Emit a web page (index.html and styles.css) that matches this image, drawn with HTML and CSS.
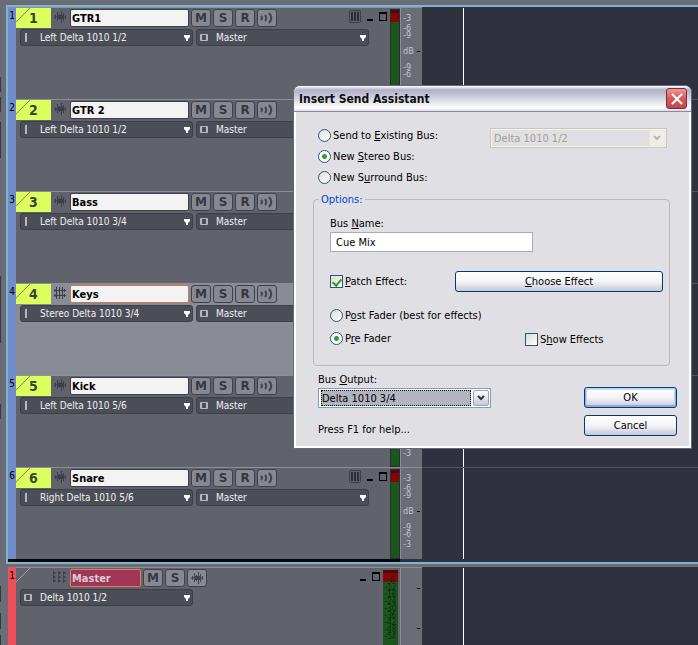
FILE: index.html
```
<!DOCTYPE html>
<html lang="en">
<head>
  <meta charset="UTF-8">
  <meta name="viewport" content="width=device-width, initial-scale=1.0">
  <title>Insert Send Assistant</title>
  <link rel="stylesheet" href="styles.css">
</head>
<body>
  <svg class="symbols" aria-hidden="true">
    <symbol id="icon-wave" viewBox="0 0 12 12">
      <path d="M0 6H12M1.5 4V8M3.5 1V10M4.5 4V8M5.5 3V9M6.5 4V8M7.5 0V12M8.500 4V8M9.5 2V10M11.5 4V8"/>
    </symbol>
    <symbol id="icon-stereo" viewBox="0 0 12 12">
      <path d="M0 3.500H12M0 8.500H12M2.500 0V12M5.500 0V12M8.500 0V12M10.500 2V5M10.500 7V10M1 2V5M1 7V10"/>
    </symbol>
    <symbol id="icon-bus" viewBox="0 0 14 12">
      <path d="M0 0L3 2L0 4ZM5 0L8 2L5 4ZM10 0L13 2L10 4ZM0 4L3 6L0 8ZM5 4L8 6L5 8ZM10 4L13 6L10 8ZM0 8L3 10L0 12ZM5 8L8 10L5 12ZM10 8L13 10L10 12Z"/>
    </symbol>
    <symbol id="icon-echo" viewBox="0 0 14 12">
      <path d="M1 4Q3 6 1 8M5 3Q7.500 6 5 9M9 1Q13.500 6 9 11"/>
    </symbol>
    <symbol id="icon-slash" viewBox="0 0 14 14">
      <path d="M0 14L14 0"/>
    </symbol>
    <symbol id="icon-bars" viewBox="0 0 10 11">
      <path d="M2 1V10M5 1V10M8 1V10"/>
    </symbol>
    <symbol id="icon-arrow" viewBox="0 0 6 6">
      <path d="M0 0H6V2L4 4V6H2V4L0 2Z"/>
    </symbol>
    <symbol id="icon-chevron" viewBox="0 0 8 6">
      <path d="M1 1L4 4L7 1"/>
    </symbol>
  </svg>

  <main class="app">
    <section class="tracks">
      <article class="track">
        <div class="strip">1</div>
        <div class="controls">
          <div class="head">
            <div class="number"><svg class="slash"><use href="#icon-slash"/></svg>1</div>
            <svg class="type"><use href="#icon-wave"/></svg>
            <input class="name" type="text" value="GTR1" aria-label="Track name">
            <button class="key">M</button>
            <button class="key">S</button>
            <button class="key">R</button>
            <button class="key" aria-label="Input echo"><svg class="echo"><use href="#icon-echo"/></svg></button>
            <div class="window-tools"><button class="bars" aria-label="Show meters"><svg><use href="#icon-bars"/></svg></button><button class="min" aria-label="Minimize"></button><button class="max" aria-label="Maximize"></button></div>
          </div>
          <div class="routing">
            <div class="picker"><i class="mono"></i><select aria-label="Input"><option>Left Delta 1010 1/2</option></select><svg><use href="#icon-arrow"/></svg></div>
            <div class="picker"><i class="out"></i><select aria-label="Output"><option>Master</option></select><svg><use href="#icon-arrow"/></svg></div>
          </div>
        </div>
        <div class="meter"></div>
        <div class="scale"><span>-3</span><span>-6</span><span>-9</span><span class="db">dB</span><span>-9</span><span>-6</span></div>
        <div class="lane"></div>
      </article>

      <article class="track">
        <div class="strip">2</div>
        <div class="controls">
          <div class="head">
            <div class="number"><svg class="slash"><use href="#icon-slash"/></svg>2</div>
            <svg class="type"><use href="#icon-wave"/></svg>
            <input class="name" type="text" value="GTR 2" aria-label="Track name">
            <button class="key">M</button>
            <button class="key">S</button>
            <button class="key">R</button>
            <button class="key" aria-label="Input echo"><svg class="echo"><use href="#icon-echo"/></svg></button>
          </div>
          <div class="routing">
            <div class="picker"><i class="mono"></i><select aria-label="Input"><option>Left Delta 1010 1/2</option></select><svg><use href="#icon-arrow"/></svg></div>
            <div class="picker"><i class="out"></i><select aria-label="Output"><option>Master</option></select><svg><use href="#icon-arrow"/></svg></div>
          </div>
        </div>
        <div class="meter"></div>
        <div class="scale"></div>
        <div class="lane"></div>
      </article>

      <article class="track">
        <div class="strip">3</div>
        <div class="controls">
          <div class="head">
            <div class="number"><svg class="slash"><use href="#icon-slash"/></svg>3</div>
            <svg class="type"><use href="#icon-wave"/></svg>
            <input class="name" type="text" value="Bass" aria-label="Track name">
            <button class="key">M</button>
            <button class="key">S</button>
            <button class="key">R</button>
            <button class="key" aria-label="Input echo"><svg class="echo"><use href="#icon-echo"/></svg></button>
          </div>
          <div class="routing">
            <div class="picker"><i class="mono"></i><select aria-label="Input"><option>Left Delta 1010 3/4</option></select><svg><use href="#icon-arrow"/></svg></div>
            <div class="picker"><i class="out"></i><select aria-label="Output"><option>Master</option></select><svg><use href="#icon-arrow"/></svg></div>
          </div>
        </div>
        <div class="meter"></div>
        <div class="scale"></div>
        <div class="lane"></div>
      </article>

      <article class="track selected">
        <div class="strip">4</div>
        <div class="controls">
          <div class="head">
            <div class="number"><svg class="slash"><use href="#icon-slash"/></svg>4</div>
            <svg class="type"><use href="#icon-stereo"/></svg>
            <input class="name" type="text" value="Keys" aria-label="Track name">
            <button class="key">M</button>
            <button class="key">S</button>
            <button class="key">R</button>
            <button class="key" aria-label="Input echo"><svg class="echo"><use href="#icon-echo"/></svg></button>
          </div>
          <div class="routing">
            <div class="picker"><i class="mono"></i><select aria-label="Input"><option>Stereo Delta 1010 3/4</option></select><svg><use href="#icon-arrow"/></svg></div>
            <div class="picker"><i class="out"></i><select aria-label="Output"><option>Master</option></select><svg><use href="#icon-arrow"/></svg></div>
          </div>
        </div>
        <div class="meter"></div>
        <div class="scale"></div>
        <div class="lane"></div>
      </article>

      <article class="track">
        <div class="strip">5</div>
        <div class="controls">
          <div class="head">
            <div class="number"><svg class="slash"><use href="#icon-slash"/></svg>5</div>
            <svg class="type"><use href="#icon-wave"/></svg>
            <input class="name" type="text" value="Kick" aria-label="Track name">
            <button class="key">M</button>
            <button class="key">S</button>
            <button class="key">R</button>
            <button class="key" aria-label="Input echo"><svg class="echo"><use href="#icon-echo"/></svg></button>
          </div>
          <div class="routing">
            <div class="picker"><i class="mono"></i><select aria-label="Input"><option>Left Delta 1010 5/6</option></select><svg><use href="#icon-arrow"/></svg></div>
            <div class="picker"><i class="out"></i><select aria-label="Output"><option>Master</option></select><svg><use href="#icon-arrow"/></svg></div>
          </div>
        </div>
        <div class="meter"></div>
        <div class="scale last"><span>-3</span></div>
        <div class="lane"></div>
      </article>

      <article class="track">
        <div class="strip">6</div>
        <div class="controls">
          <div class="head">
            <div class="number"><svg class="slash"><use href="#icon-slash"/></svg>6</div>
            <svg class="type"><use href="#icon-wave"/></svg>
            <input class="name" type="text" value="Snare" aria-label="Track name">
            <button class="key">M</button>
            <button class="key">S</button>
            <button class="key">R</button>
            <button class="key" aria-label="Input echo"><svg class="echo"><use href="#icon-echo"/></svg></button>
            <div class="window-tools"><button class="bars" aria-label="Show meters"><svg><use href="#icon-bars"/></svg></button><button class="min" aria-label="Minimize"></button><button class="max" aria-label="Maximize"></button></div>
          </div>
          <div class="routing">
            <div class="picker"><i class="mono"></i><select aria-label="Input"><option>Right Delta 1010 5/6</option></select><svg><use href="#icon-arrow"/></svg></div>
            <div class="picker"><i class="out"></i><select aria-label="Output"><option>Master</option></select><svg><use href="#icon-arrow"/></svg></div>
          </div>
        </div>
        <div class="meter"></div>
        <div class="scale"><span>-3</span><span>-6</span><span>-9</span><span class="db">dB</span><span>-9</span><span>-6</span><span>-3</span></div>
        <div class="lane"></div>
      </article>
      <div class="tracks-end"><span></span></div>
    </section>

    <section class="buses">
      <article class="track master">
        <div class="strip">1</div>
        <div class="controls">
          <div class="head">
            <div class="number"><svg class="slash"><use href="#icon-slash"/></svg></div>
            <svg class="type bus"><use href="#icon-bus"/></svg>
            <input class="name" type="text" value="Master" aria-label="Bus name">
            <button class="key">M</button>
            <button class="key">S</button>
            <button class="key" aria-label="Waveform preview"><svg class="wave"><use href="#icon-wave"/></svg></button>
            <div class="window-tools"><button class="min" aria-label="Minimize"></button><button class="max" aria-label="Maximize"></button></div>
          </div>
          <div class="routing">
            <div class="picker"><i class="out"></i><select aria-label="Output"><option>Delta 1010 1/2</option></select><svg><use href="#icon-arrow"/></svg></div>
          </div>
        </div>
        <div class="meter wide"><span>-6</span><span>-12</span><span>-18</span><span>-24</span><span>-30</span><span>-36</span><span>-42</span><span>-48</span><span>-54</span></div>
        <div class="scale ticks"><i></i><i></i></div>
        <div class="lane"></div>
      </article>
    </section>
  </main>

  <form class="dialog" role="dialog" aria-labelledby="dialog-title">
    <header class="title-bar">
      <h1 id="dialog-title">Insert Send Assistant</h1>
      <button type="button" class="close" aria-label="Close">
        <svg viewBox="0 0 12 12"><path d="M1 1L11 11M11 1L1 11"/></svg>
      </button>
    </header>
    <div class="dialog-body">
      <div class="destination">
        <div class="choices">
          <label><input type="radio" name="bus"><span>Send to <u>E</u>xisting Bus:</span></label>
          <label><input type="radio" name="bus" checked><span>New <u>S</u>tereo Bus:</span></label>
          <label><input type="radio" name="bus"><span>New S<u>u</u>rround Bus:</span></label>
        </div>
        <div class="combo disabled">
          <select aria-label="Existing bus" disabled><option>Delta 1010 1/2</option></select>
          <svg><use href="#icon-chevron"/></svg>
        </div>
      </div>

      <fieldset>
        <legend>Options:</legend>
        <label for="bus-name"><span>Bus <u>N</u>ame:</span></label>
        <input type="text" id="bus-name" class="bus-name" value="Cue Mix">
        <div class="effect">
          <label><input type="checkbox" checked><span><u>P</u>atch Effect:</span></label>
          <button type="button" class="button"><span><u>C</u>hoose Effect</span></button>
        </div>
        <div class="fader">
          <div class="choices">
            <label><input type="radio" name="fader"><span>P<u>o</u>st Fader (best for effects)</span></label>
            <label><input type="radio" name="fader" checked><span>P<u>r</u>e Fader</span></label>
          </div>
          <label class="show-effects"><input type="checkbox"><span>S<u>h</u>ow Effects</span></label>
        </div>
      </fieldset>

      <footer>
        <div class="output">
          <label for="bus-output"><span>Bus <u>O</u>utput:</span></label>
          <div class="combo">
            <select id="bus-output"><option>Delta 1010 3/4</option></select>
            <svg><use href="#icon-chevron"/></svg>
          </div>
          <p>Press F1 for help...</p>
        </div>
        <div class="actions">
          <button type="submit" class="button primary">OK</button>
          <button type="button" class="button">Cancel</button>
        </div>
      </footer>
    </div>
  </form>
</body>
</html>
```
FILE: styles.css
```
* {
  box-sizing: border-box;
}

body {
  margin: 0;
  min-height: 100vh;
  background-color: #6b6d76;
  font-family: "DejaVu Sans Condensed", "Noto Sans", sans-serif;
  font-size: 11px;
  color: #000;
  overflow: hidden;
}

button,
input,
select {
  margin: 0;
  padding: 0;
  font: inherit;
  color: inherit;
}

u {
  text-decoration-thickness: 1px;
  text-underline-offset: 1px;
  text-decoration-skip-ink: none;
}

.symbols {
  display: none;
}

.app {
  display: flex;
  flex-direction: column;
  height: 100vh;
  padding: 5px 0 0 6px;
  overflow: hidden;
  /* edge of the panel behind the track list */
  background: linear-gradient(#6b6d76 0 77px, #363841 77px 92px, #6b6d76 92px 97px, #363841 97px 112px, #6b6d76 112px 122px, #363841 122px 158px, #6b6d76 158px 276px, #363841 276px 343px, #6b6d76 343px 404px, #363841 404px 419px, #6b6d76 419px 586px, #363841 586px 602px, #6b6d76 602px 613px, #363841 613px 629px, #6b6d76 629px 635px, #363841 635px) no-repeat 0 0 / 1px 100%;
}

.tracks {
  border: solid #7cb5d3;
  border-width: 2px 0 2px 2px;
}

.tracks-end {
  display: grid;
  grid-template-columns: 392px 22px 1fr;
  height: 3px;
  background-color: #2f323e;
}

.tracks-end span {
  background-color: #050507;
}

.buses {
  flex: 1;
  display: flex;
  margin-top: 3px;
  padding-left: 2px;
  overflow: hidden;
}

.track {
  display: grid;
  grid-template-columns: 8px 374px 10px 22px 1fr;
  height: 92px;
}

.strip {
  background-color: #728bc9;
  font-size: 10px;
  line-height: 17px;
  text-align: center;
}

.controls,
.meter {
  border-top: 1px solid #8d8e9c;
  background-color: #61636c;
}

.selected .controls,
.selected .meter {
  background-color: #8a8c95;
}

.head {
  display: flex;
  align-items: center;
  gap: 2px;
  height: 20px;
}

.number {
  position: relative;
  width: 35px;
  height: 20px;
  background-color: #dcff5e;
  color: #3a4032;
  font-size: 14px;
  font-weight: bold;
  line-height: 20px;
  text-align: center;
}

.slash {
  position: absolute;
  left: 0;
  top: 0;
  width: 14px;
  height: 14px;
  stroke: #7f8c58;
}

.type {
  width: 12px;
  height: 12px;
  margin: 0 2px 2px 1px;
  fill: none;
  stroke: #3c3e48;
}

.name {
  width: 119px;
  height: 18px;
  padding-left: 1px;
  border: 1px solid #3c3e48;
  border-radius: 2px;
  background-color: #f3f3f4;
  font-weight: bold;
}

.selected .name {
  border-color: #c87850;
}

.key {
  display: flex;
  align-items: center;
  justify-content: center;
  width: 20px;
  height: 18px;
  border: 1px solid #3f414a;
  border-radius: 3px;
  background-color: #868892;
  color: #363841;
  font-family: "DejaVu Sans", sans-serif;
  font-size: 12px;
  font-weight: bold;
}

.echo,
.wave {
  flex: none;
  width: 14px;
  height: 12px;
  fill: none;
  stroke: #43454e;
}

.echo {
  stroke-width: 2;
}

.window-tools {
  display: flex;
  align-items: center;
  gap: 6px;
  margin-left: auto;
  padding: 0 3px 3px 0;
}

.window-tools button {
  border: 0;
  background: none;
}

.window-tools .bars {
  display: flex;
  width: 12px;
  height: 13px;
  border: 1px solid #3c3e48;
  border-radius: 2px;
}

.bars svg {
  width: 10px;
  height: 11px;
  stroke: #2c2e36;
  stroke-width: 2;
}

.window-tools .min {
  width: 6px;
  height: 8px;
  border-bottom: 2px solid #000;
}

.window-tools .max {
  width: 8px;
  height: 9px;
  border: 1px solid #000;
  border-top-width: 2px;
}

.routing {
  display: flex;
  gap: 3px;
  padding: 1px 0 0 4px;
}

.picker {
  display: grid;
  grid-template-columns: 20px 1fr 10px;
  align-items: center;
  width: 173px;
  height: 17px;
  border: 1px solid #3c3e48;
  border-radius: 3px;
  background-color: #4c4e57;
  color: #f0f0f2;
  font-size: 10px;
}

.picker select {
  grid-area: 1 / 1 / 2 / 4;
  width: 100%;
  height: 15px;
  padding-left: 19px;
  border: 0;
  background: none;
  appearance: none;
}

.picker i {
  grid-area: 1 / 1 / 2 / 2;
}

.picker svg {
  grid-area: 1 / 3 / 2 / 4;
  justify-self: center;
  width: 6px;
  height: 6px;
  fill: #fff;
  pointer-events: none;
}

.mono {
  width: 2px;
  height: 9px;
  margin-left: 4px;
  background-color: #b5b7bd;
}

.out {
  width: 8px;
  height: 7px;
  margin-left: 3px;
  border: 2px solid #b5b7bd;
  border-width: 1px 2px;
  border-radius: 1px;
}

.meter {
  padding-top: 1px;
}

.meter::before {
  content: "";
  display: block;
  width: 8px;
  height: 88px;
  border: 1px solid #2b2d33;
  background: linear-gradient(#4a0a0c 0 3px, #860306 3px 12px, #1c561f 12px);
}

.scale {
  display: flex;
  flex-direction: column;
  padding: 7px 0 0 2px;
  border: solid #8d8e97;
  border-width: 1px 0 0 1px;
  background-color: #6b6d76;
  color: #c3c4c9;
  font-size: 9px;
  line-height: 7px;
}

.scale span:nth-child(2),
.scale span:nth-child(7) {
  margin-top: 3px;
}

.scale .db,
.scale .db + span {
  margin-top: 9px;
}

.scale .db {
  display: flex;
  align-items: center;
  justify-content: space-between;
  padding-right: 2px;
}

.scale .db::after,
.ticks i {
  content: "";
  width: 3px;
  height: 1px;
  background-color: #000;
}

.scale.last {
  justify-content: flex-end;
  padding-bottom: 10px;
}

.lane {
  border-top: 1px solid #50525d;
  background: #2f323e;
}

.lane::before {
  content: "";
  display: block;
  width: 1px;
  height: 100%;
  margin-left: 41px;
  background-color: #fff;
}

.track:first-child .lane {
  border-top-color: #2f323e;
}

.master {
  flex: 1;
  grid-template-columns: 8px 367px 17px 22px 1fr;
  height: auto;
}

.master .strip {
  background-color: #ee4f5a;
}

.master .number {
  background: none;
}

.master .slash {
  stroke: #a0a2aa;
}

.type.bus {
  width: 14px;
  margin: 0 1px 2px 0;
  fill: #3c3e48;
  stroke: none;
}

.master .name {
  width: 71px;
  border-color: #e08050;
  background-color: #a03558;
  color: #dccdd4;
}

.meter.wide {
  padding: 9px 2px 0 0;
  background: linear-gradient(to right, transparent 15px, #61636c 15px), linear-gradient(#61636c 0 2px, #4a0a0c 2px 5px, #860306 5px 14px, #1c561f 14px);
  color: #0c2a12;
  font-size: 8px;
  line-height: 7px;
}

.meter.wide::before {
  display: none;
}

.meter.wide span {
  display: block;
  text-align: center;
}

.scale.ticks {
  gap: 39px;
  align-items: flex-end;
  padding: 20px 2px 0 0;
}

.dialog {
  position: absolute;
  left: 293px;
  top: 85px;
  width: 399px;
  border: 1px solid #66667c;
  border-radius: 7px 7px 0 0;
  background-color: #e0dfe3;
  box-shadow: inset 0 0 0 2px #fff;
}

.title-bar {
  display: flex;
  align-items: center;
  justify-content: space-between;
  height: 26px;
  padding: 0 4px 0 5px;
  border-bottom: 1px solid #8a8a9c;
  border-radius: 6px 6px 0 0;
  background: linear-gradient(#fff 0, #b0b0c8 4px, #c9c9d8 10px, #fff 22px, #d8d8e2);
}

h1 {
  margin: 0;
  font-size: 12px;
  color: #0e1010;
}

.close {
  display: flex;
  align-items: center;
  justify-content: center;
  width: 21px;
  height: 21px;
  border: 1px solid #7e2c34;
  border-radius: 3px;
  background: linear-gradient(#ee9a96, #d4585c 50%, #c04a50);
}

.close svg {
  width: 12px;
  height: 12px;
  fill: none;
  stroke: #fff;
  stroke-width: 2;
}

.dialog-body {
  padding: 13px 14px 12px 19px;
}

.destination,
.effect,
.fader,
footer {
  display: flex;
  justify-content: space-between;
}

.destination {
  margin-bottom: 5px;
  padding: 0 10px 0 5px;
}

.choices {
  display: flex;
  flex-direction: column;
}

label {
  display: flex;
  align-items: center;
  gap: 2px;
}

.choices label {
  height: 21px;
}

input[type="radio"],
input[type="checkbox"] {
  flex: none;
  width: 13px;
  height: 13px;
  border: 1px solid #2c5478;
  background: linear-gradient(135deg, #dcdcd7, #fff);
  appearance: none;
}

input[type="radio"] {
  border-radius: 50%;
}

input[type="radio"]:checked {
  background: radial-gradient(circle, #2ca02c 2px, #fff 3px);
}

input[type="checkbox"]:checked::before {
  content: "";
  display: block;
  width: 4px;
  height: 7px;
  margin: 1px 0 0 3px;
  border: solid #21a121;
  border-width: 0 2px 2px 0;
  transform: rotate(40deg);
}

.combo {
  display: grid;
  grid-template-columns: 1fr 18px;
  width: 173px;
  height: 20px;
  border: 1px solid #7f9db9;
  background-color: #fff;
}

.combo select {
  grid-area: 1 / 1 / 2 / 2;
  height: 16px;
  margin: 1px 1px 1px 2px;
  border: 1px dotted #000;
  background-color: #b2b4bf;
  appearance: none;
}

.combo svg {
  grid-area: 1 / 2 / 2 / 3;
  width: 16px;
  height: 16px;
  margin: 1px;
  padding: 4px 3px;
  border: 1px solid #9a9fb5;
  border-radius: 2px;
  background: linear-gradient(#fff, #c8c8d8);
  fill: none;
  stroke: #303440;
  stroke-width: 2;
}

.combo.disabled {
  width: 177px;
  margin-top: 3px;
  border-color: #c9c7ba;
  background-color: #e0dfe3;
  box-shadow: inset 0 0 0 1px #f5f4ea;
}

.combo.disabled select {
  border-color: transparent;
  background: none;
  color: #a1a192;
  opacity: 1;
}

.combo.disabled svg {
  border-color: #e8e8dc;
  background: #eeeee6;
  stroke: #b8b8aa;
}

fieldset {
  min-width: 0;
  margin: 0 7px 0 0;
  padding: 11px 6px 15px 16px;
  border: 1px solid #b8b8c0;
  border-radius: 4px;
}

legend {
  margin-left: -11px;
  padding: 0 2px;
  color: #0046d5;
}

.bus-name {
  width: 203px;
  height: 20px;
  margin-top: 2px;
  padding-left: 5px;
  border: 1px solid #a5acb2;
  background-color: #fff;
}

.effect {
  margin-top: 19px;
}

.button {
  height: 21px;
  border: 1px solid #003c74;
  border-radius: 3px;
  background: linear-gradient(#fff, #f4f4f8 50%, #c8c8d8);
}

.effect .button {
  width: 208px;
}

.fader {
  margin-top: 12px;
  align-items: flex-end;
}

.fader .choices label {
  height: 23px;
}

.show-effects {
  width: 138px;
  height: 21px;
}

footer {
  margin-top: 7px;
  padding-left: 5px;
}

.output .combo {
  margin-top: 2px;
}

.output p {
  margin: 15px 0 0;
}

.actions {
  display: flex;
  flex-direction: column;
  gap: 7px;
  padding-top: 14px;
}

.actions .button {
  width: 93px;
}

.primary {
  box-shadow: inset 0 -1px 0 1px #8caaE6, inset 0 0 0 2px #c4d6f8;
}
```
